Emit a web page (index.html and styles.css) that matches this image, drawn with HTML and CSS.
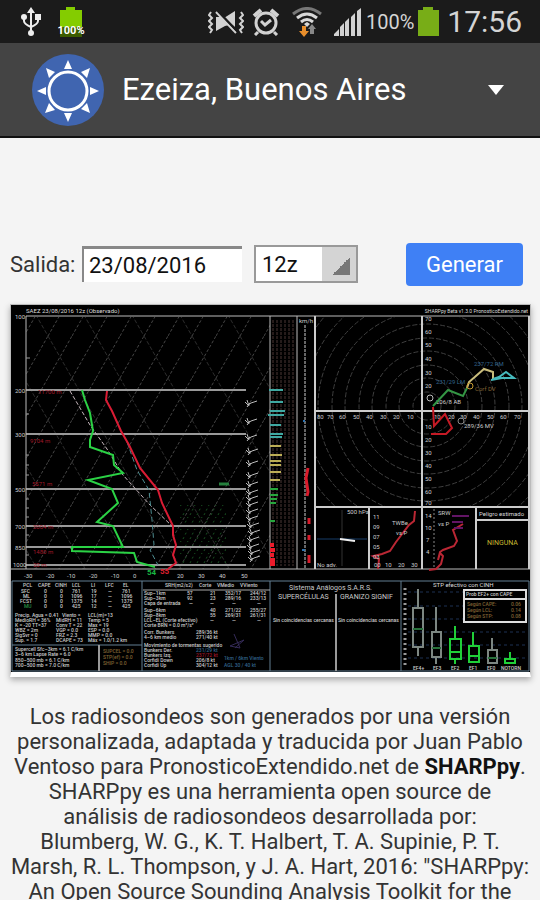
FILE: index.html
```html
<!DOCTYPE html>
<html lang="es">
<head>
<meta charset="utf-8">
<meta name="viewport" content="width=device-width, initial-scale=1">
<title>Radiosondeos</title>
<link rel="stylesheet" href="styles.css">
</head>
<body>
<div class="status">
  <div class="status-group left">
    <svg class="icon-usb" viewBox="0 0 20 30" aria-hidden="true"><g fill="none" stroke="#eee" stroke-width="2"><path d="M10 4v22M3 10v4q0 3 7 6 7-3 7-6v-4"/></g><g fill="#eee"><path d="M10 0l4 6H6z"/><circle cx="10" cy="26" r="3"/><circle cx="3" cy="10" r="3"/><path d="M14 7h6v6h-6z"/></g></svg>
    <div class="charge">
      <svg viewBox="0 0 22 30" aria-hidden="true"><path fill="#84cc00" d="M0 3h6V0h9v3h7v17H0z"/><path fill="#3c5c00" d="M0 20h22v10H0z"/></svg>
      <span>100%</span>
    </div>
  </div>
  <div class="status-group right">
    <svg class="icon-mute" viewBox="0 0 36 26" aria-hidden="true"><g fill="#d2d2d2"><path d="M8 8h5l8 8-4 1-9 5zM16 9L27 2v16z"/></g><g fill="none" stroke="#d2d2d2" stroke-width="2"><path d="M3 3L1 6l3 3-3 3 3 3-3 3 3 3-2 3M33 3l2 3-3 3 3 3-3 3 3 3-3 3 2 3"/><path d="M8 3l20 21"/></g><path d="M10 2l20 21" stroke="#1b1b1b" stroke-width="2"/></svg>
    <svg class="icon-alarm" viewBox="0 0 28 28" aria-hidden="true"><g fill="none" stroke="#d2d2d2" stroke-width="3"><circle cx="14" cy="15" r="10"/><path d="M9 13l4 4 6-5M6 24l-3 3M22 24l3 3"/><path d="M2 8l7-6M26 8l-7-6" stroke-width="4"/></g></svg>
    <svg class="icon-wifi" viewBox="0 0 30 30" aria-hidden="true"><g fill="none" stroke-width="3"><path d="M1 7q14-11 28 0" stroke="#777"/><path d="M5 11q10-8 20 0M9 15q6-5 12 0" stroke="#d8d8d8"/></g><path d="M12 17l3-2 3 2-3 3z" fill="#d8d8d8"/><path d="M10 19h4v5h3l-5 6-5-6h3z" fill="#e98f2c"/><path d="M18 27v-5h-2l4-5 4 5h-2v5z" fill="#888"/></svg>
    <svg class="icon-signal" viewBox="0 0 28 28" aria-hidden="true"><path fill="#d2d2d2" d="M0 28v-2l5-5v7zM6 28v-9l4-4v13zM11 28V14l4-4v18zM17 28V9l4-4v23zM23 28V3l4-3v28z"/></svg>
    <span class="percent">100%</span>
    <svg class="icon-battery" viewBox="0 0 21 29" aria-hidden="true"><path fill="#78ad17" d="M0 3h5V0h10v3h6v26H0z"/></svg>
    <span class="clock">17:56</span>
  </div>
</div>

<header class="bar">
  <svg class="logo" viewBox="0 0 72 72" aria-hidden="true"><circle cx="36" cy="36" r="36" fill="#4065b0"/><circle cx="36" cy="37" r="19" fill="none" stroke="#fff" stroke-width="3"/><g fill="#fff"><path d="M36 6l4 9h-8zM36 68l4-9h-8zM5 37l9-4v8zM67 37l-9-4v8zM14 14l9 4-6 6zM58 14l-9 4 6 6zM13 59l4-10 6 7zM58 59l-9-4 6-6z"/></g></svg>
  <h1>Ezeiza, Buenos Aires</h1>
  <button class="menu" type="button" aria-label="Cambiar lugar"><svg viewBox="0 0 16 10" aria-hidden="true"><path d="M0 0h16l-8 10z" fill="#fff"/></svg></button>
</header>

<main>
  <form class="controls">
    <label for="date">Salida:</label>
    <input id="date" type="text" value="23/08/2016">
    <select id="hour" aria-label="Hora"><option>12z</option><option>00z</option></select>
    <button class="go" type="button">Generar</button>
  </form>

  <figure class="sounding">
  <svg viewBox="11 305 519 367" role="img" aria-label="Radiosondeo SAEZ 23/08/2016 12z">
    <defs>
      <pattern id="adiabats" width="24" height="42" patternUnits="userSpaceOnUse"><path d="M0 42L24 0" stroke="#444" stroke-dasharray="3 2"/></pattern>
      <pattern id="curves" width="48" height="84" patternUnits="userSpaceOnUse"><path d="M0 0L48 84" stroke="#2c2c2c" stroke-dasharray="4 2"/></pattern>
      <pattern id="grid" width="4" height="4" patternUnits="userSpaceOnUse"><path d="M1 0v3" stroke="#4a3634"/></pattern>
      <pattern id="mixing" width="7" height="12" patternUnits="userSpaceOnUse"><path d="M1 11L6 1" stroke="#175020" stroke-dasharray="2 3"/></pattern>
      <path id="barb" d="M0 0l3 3 3-2 6-2M2-2l2 6M5 1l-3 4" fill="none" stroke="#bbb"/>
      <clipPath id="hodo"><path d="M316 317h212v189H316z"/></clipPath>
    </defs>
    <path d="M11 305h519v367H11z"/>
    <path d="M26 317h244v252H26z" fill="url(#curves)"/><path d="M26 317h244v252H26z" fill="url(#adiabats)"/>
    <path d="M180 505h46v60h-46z" fill="url(#mixing)"/>
    <g class="head"><text x="26" y="313">SAEZ 23/08/2016 12z (Observado)</text><text class="end" x="528" y="313">SHARPpy Beta v1.3.0  PronosticoExtendido.net</text></g>
    <g fill="none" stroke="#999"><path d="M26 390h220M26 434h220M26 489h220M26 526h220M26 547h220M26 565h220" stroke-width="2"/><path d="M26 316h504M26 316v253M11 569h519M270 316v253M297 316v253" stroke="#bbb"/><path d="M26 358h4M26 414h3M26 455h3M26 465h3M26 475h3M26 499h3M26 508h3M26 517h3M26 535h3M26 555h3"/></g>
    <path d="M70 391L90 425 107 449 123 475 150 505 172 526" fill="none" stroke="#c8b8be" stroke-dasharray="4 2"/>
    <path d="M127 442L137 470 149 490 152 520 154 545 150 550 158 565" fill="none" stroke="#4e8d91" stroke-dasharray="5 3"/>
    <path d="M107 391l-1 9 6 11 9 20 8 14 11 23 18 22 4 13 11 23v9l3 10-3 10 3 8-8 6" fill="none" stroke="#d91c34" stroke-width="2"/>
    <path d="M82 390l3 10 5 13 3 18-3 9v7l23 8 1 10 9 8-35 7 24 9 6 14-21 19 16 4 10 21H72v4l62 2 3 9 18 5" fill="none" stroke="#2bd245" stroke-width="2"/>
    <g class="surface"><text x="147" y="575" fill="#19b541">54</text><text x="160" y="574" fill="#e02030">55</text></g>
    <g class="tiny"><text x="15" y="319">100</text><text x="15" y="393">200</text><text x="15" y="437">300</text><text x="15" y="492">500</text><text x="15" y="529">700</text><text x="15" y="550">850</text><text x="13" y="567">1000</text>
    <text x="24" y="578">-30</text><text x="46" y="578">-20</text><text x="67" y="578">-10</text><text x="89" y="578">-20</text><text x="111" y="578">-10</text><text x="133" y="578">0</text><text x="177" y="578">20</text><text x="198" y="578">30</text><text x="219" y="578">40</text><text x="241" y="578">50</text>
    <text class="red" x="38" y="394">11700 m</text><text class="red" x="30" y="443">9104 m</text><text class="red" x="32" y="486">5571 m</text><text class="red" x="33" y="529">3004 m</text><text class="red" x="33" y="554">1480 m</text><text class="red" x="33" y="567">20 m</text></g>
    <path d="M219 484h10" stroke="#25803d" stroke-width="3"/>
    <g><use href="#barb" x="245" y="402"/><use href="#barb" x="245" y="420"/><use href="#barb" x="245" y="436"/><use href="#barb" x="246" y="450"/><use href="#barb" x="246" y="462"/><use href="#barb" x="246" y="474"/><use href="#barb" x="246" y="483"/><use href="#barb" x="246" y="491"/><use href="#barb" x="246" y="497"/><use href="#barb" x="246" y="503"/><use href="#barb" x="246" y="510"/><use href="#barb" x="246" y="517"/><use href="#barb" x="247" y="524"/><use href="#barb" x="248" y="531"/><use href="#barb" x="247" y="538"/><use href="#barb" x="247" y="545"/><use href="#barb" x="248" y="551"/><use href="#barb" x="248" y="557"/></g>

    <path d="M272 320h23v246h-23z" fill="url(#grid)"/>
    <g fill="none" stroke-width="2"><path d="M269 390h14M270 402h13M270 411h15M268 415h16M270 425h11M270 434h13M270 437h12" stroke="#3fa9a2"/><path d="M270 446h11M270 455h12M270 461h11M270 465h11M270 472h11M270 480h10" stroke="#bcae55"/><path d="M270 489h8M270 495h8M270 499h7M270 503h6M270 521h5" stroke="#27a63d"/><path d="M270 545h4M270 550h5M270 555h4M270 560h5M270 564h5" stroke="#ed1c2c" stroke-width="4"/></g>
    <path d="M305 325v243" stroke="#ccc" stroke-dasharray="3 1"/><g class="tiny"><text x="299" y="323">km/h</text></g>
    <path d="M308 468l-2 10 2 14-1 4M309 518v6M309 535v5M309 555v8" stroke="#d81b2b" stroke-width="3" fill="none"/>
    <path d="M303 421h2M302 550h3" stroke="#2f75b2" stroke-width="2"/>

    <g clip-path="url(#hodo)" fill="none" stroke="#3f3f3f" stroke-dasharray="5 2"><circle cx="427" cy="406" r="14"/><circle cx="427" cy="406" r="28"/><circle cx="427" cy="406" r="41"/><circle cx="427" cy="406" r="55"/><circle cx="427" cy="406" r="68"/><circle cx="427" cy="406" r="82"/><circle cx="427" cy="406" r="95"/><circle cx="427" cy="406" r="109"/><circle cx="427" cy="406" r="122"/><circle cx="427" cy="406" r="136"/></g>
    <g fill="none" stroke="#ccc" stroke-width="2"><path d="M315 316v253M315 411h214M422 316v253M315 507h214M369 507v62M476 507v62M476 520h53M529 316v253"/></g>
    <g class="tiny"><text x="425" y="321">70</text><text x="425" y="334">60</text><text x="425" y="347">50</text><text x="425" y="361">40</text><text x="425" y="375">30</text><text x="425" y="388">20</text><text x="425" y="429">10</text><text x="425" y="442">20</text><text x="425" y="455">30</text><text x="425" y="468">40</text><text x="425" y="481">50</text><text x="425" y="494">60</text><text x="425" y="505">70</text>
    <text x="317" y="419">80</text><text x="327" y="419">70</text><text x="339" y="419">60</text><text x="353" y="419">50</text><text x="366" y="419">40</text><text x="380" y="419">30</text><text x="393" y="419">20</text><text x="407" y="419">10</text><text x="434" y="419">10</text><text x="448" y="419">20</text><text x="460" y="419">30</text><text x="473" y="419">40</text><text x="487" y="419">50</text><text x="500" y="419">60</text><text x="514" y="419">70</text><text x="436" y="404">206/8 AB</text><text x="464" y="428">289/36 MV</text><text class="blue" x="436" y="384">231/29 LM</text><text class="blue" x="474" y="366">237/72 RM</text><text class="orange" x="475" y="391">Corf DV</text></g>
    <g fill="none" stroke-width="2"><path d="M433 406l15-16 15 6 4-8" stroke="#349644"/><path d="M467 388l2-6 15-13 9 3v7" stroke="#c9bd7c"/><path d="M493 379l6-2 7-5 8 6h-12l-11 2" stroke="#46b9bd"/><path d="M433 407l1 19 11-12 7 14-6 6h-15" stroke="#c61a25"/><circle cx="470" cy="386" r="3" stroke="#c59b33" stroke-width="1"/><circle cx="430" cy="398" r="3" stroke="#bbb" stroke-width="1"/><circle cx="461" cy="421" r="3" stroke="#888" stroke-width="1"/></g>

    <g fill="none"><path d="M342 510v56" stroke="#333"/><path d="M317 539h50" stroke="#173c68"/><path d="M340 539l15 2" stroke="#eee" stroke-width="2"/><path d="M415 511l-1 10-5 4-13 17-6 9-8 3-9 2 6 3-1 10" stroke="#ba2734" stroke-width="2"/><path d="M463 524l-10 6 4 11-3 5-11 4-3 2-2 8 2-7 3 3-2 8-5 5-7 1" stroke="#ba2734" stroke-width="2"/><path d="M452 516h17M452 522h11M454 528h9" stroke="#631565" stroke-width="2"/><path d="M434 509v58" stroke="#888" stroke-dasharray="2 2"/></g>
    <g class="tiny"><text x="347" y="514">500 hPa</text><text x="317" y="567">No adv.</text><text x="373" y="519">11</text><text x="373" y="529">09</text><text x="373" y="539">07</text><text x="373" y="549">05</text><text x="373" y="559">03</text><text x="374" y="567">00</text><text x="385" y="567">10</text><text x="398" y="567">20</text><text x="411" y="567">30</text><text x="392" y="525">TWBe</text><text x="396" y="535">vs P</text><text x="425" y="518">14</text><text x="425" y="530">10</text><text x="426" y="542">7</text><text x="426" y="554">4</text><text x="438" y="515">SRW</text><text x="438" y="526">vs P</text></g>
    <g class="head"><text x="479" y="516">Peligro estimado</text></g>
    <text class="risk" x="487" y="545">NINGUNA</text>

    <g fill="none" stroke="#637e92"><path d="M12 581h517v90H12zM142 581v90M270 581v90M401 581v90M12 645h130"/><path d="M99 645v26M336 594v77" stroke="#999" stroke-width="2"/><path d="M143 590h127" stroke="#aaa"/></g>
    <g class="data">
      <text x="23" y="587">PCL</text><text x="38" y="587">CAPE</text><text x="55" y="587">CINH</text><text x="72" y="587">LCL</text><text x="91" y="587">LI</text><text x="105" y="587">LFC</text><text x="123" y="587">EL</text>
      <text x="21" y="593">SFC</text><text x="44" y="593">0</text><text x="60" y="593">0</text><text x="72" y="593">761</text><text x="91" y="593">19</text><text x="108" y="593">—</text><text x="122" y="593">761</text>
      <text x="23" y="598">ML</text><text x="44" y="598">0</text><text x="60" y="598">0</text><text x="71" y="598">1096</text><text x="91" y="598">17</text><text x="108" y="598">—</text><text x="121" y="598">1096</text>
      <text x="20" y="603">FCST</text><text x="44" y="603">0</text><text x="60" y="603">0</text><text x="71" y="603">1375</text><text x="91" y="603">14</text><text x="108" y="603">—</text><text x="121" y="603">1375</text>
      <text class="green" x="24" y="608">MU</text><text x="44" y="608">0</text><text x="60" y="608">0</text><text x="72" y="608">425</text><text x="91" y="608">12</text><text x="108" y="608">—</text><text x="122" y="608">425</text>
      <text x="15" y="617">Precip. Agua = 0.41</text><text x="62" y="617">Viento =</text><text x="88" y="617">LCL(m)=13</text>
      <text x="15" y="622">MedioRH = 36%</text><text x="56" y="622">MidRH = 11</text><text x="88" y="622">Temp = 5</text>
      <text x="15" y="627">K = -20 TT=37</text><text x="56" y="627">Conv T = 22</text><text x="88" y="627">Max = 19</text>
      <text x="15" y="632">WBZ = 2m</text><text x="56" y="632">VGP = 0.0</text><text x="88" y="632">ESP = 0.0</text>
      <text x="15" y="637">SigSvr = 0</text><text x="56" y="637">FRZ = 2.3</text><text x="88" y="637">MMP = 0.0</text>
      <text x="15" y="642">Sup. = 1.7</text><text x="56" y="642">DCAPE = 73</text><text x="88" y="642">Máx = 1.0/1.2 km</text>
      <text x="15" y="651">Supercell Sfc–3km = 6.1 C/km</text><text x="15" y="656">3–6 km Lapse Rate = 6.0</text><text x="15" y="662">850–500 mb = 6.1 C/km</text><text x="15" y="667">700–500 mb = 7.0 C/km</text>
      <text class="brown" x="103" y="653">SUPCEL = 0.0</text><text class="brown" x="103" y="659">STP(ef) = 0.0</text><text class="brown" x="103" y="665">SHIP = 0.0</text>
      <text x="165" y="587">SRH(m2/s2)</text><text x="199" y="587">Corte</text><text x="217" y="587">VMedio</text><text x="240" y="587">VViento</text>
      <text x="144" y="595">Sup–1km</text><text x="187" y="595">57</text><text x="210" y="595">21</text><text x="225" y="595">352/17</text><text x="250" y="595">244/12</text>
      <text x="144" y="600">Sup–3km</text><text x="187" y="600">92</text><text x="210" y="600">23</text><text x="225" y="600">289/16</text><text x="250" y="600">233/13</text>
      <text x="144" y="605">Capa de entrada</text><text x="189" y="605">—</text><text x="210" y="605">—</text><text x="232" y="605">—</text><text x="257" y="605">—</text>
      <text x="144" y="612">Sup–6km</text><text x="210" y="612">40</text><text x="225" y="612">271/22</text><text x="250" y="612">255/27</text>
      <text x="144" y="617">Sup–8km</text><text x="210" y="617">55</text><text x="225" y="617">269/31</text><text x="250" y="617">261/31</text>
      <text x="144" y="622">LCL–EL (Corte efectivo)</text><text x="210" y="622">—</text><text x="232" y="622">—</text><text x="257" y="622">—</text>
      <text x="144" y="627">Corte BRN = 0.0 m²/s²</text><text x="144" y="634">Corr. Bunkers</text><text x="196" y="634">289/36 kt</text><text x="144" y="639">4–6 km medio</text><text x="196" y="639">271/40 kt</text><text x="144" y="647">Movimiento de tormentas sugerido</text>
      <text x="144" y="652">Bunkers Der.</text><text class="blue" x="196" y="652">231/29 kt</text><text x="144" y="657">Bunkers Izq.</text><text class="red" x="196" y="657">237/72 kt</text><text x="144" y="662">Corfidi Down</text><text x="196" y="662">206/8 kt</text><text x="144" y="667">Corfidi Up</text><text x="196" y="667">304/12 kt</text>
      <text class="blue" x="224" y="660">1km / 6km Viento</text><text class="blue" x="224" y="667">AGL 30 / 40 kt</text>
    </g>
    <path d="M234 634l6 14-10-2 14-6-9 8" fill="none" stroke="#352b58"/>
    <g class="titles"><text x="289" y="590">Sistema Análogos S.A.R.S.</text><text x="278" y="599">SUPERCÉLULAS</text><text x="340" y="599">GRANIZO SIGNIF</text></g>
    <g class="data"><text x="273" y="622">Sin coincidencias cercanas</text><text x="338" y="622">Sin coincidencias cercanas</text><text x="413" y="670">EF4+</text><text x="433" y="670">EF3</text><text x="451" y="670">EF2</text><text x="469" y="670">EF1</text><text x="487" y="670">EF0</text><text x="501" y="670">NOTORN</text></g>
    <g class="head"><text x="433" y="587">STP efectivo con CINH</text></g>
    <path d="M408 592h120M408 606h120M408 619h120M408 632h120M408 645h120M408 658h120" stroke="#1d3153" stroke-dasharray="3 3"/><path d="M405 588v80" stroke="#999" stroke-width="3" stroke-dasharray="2 3"/>
    <g fill="none" stroke="#7d8782" stroke-width="2"><path d="M418 589v19M413 608h10v39h-10zM418 647v9M436 607v25M432 632h9v25h-9zM436 657v7M492 638v11M488 650h9v13h-9z"/></g><g fill="none" stroke="#20cf38" stroke-width="2"><path d="M455 626v13M450 639h11v20h-11zM450 652h11M455 659v5M473 632v14M469 646h10v16h-10zM469 656h10M510 652v6M505 659h10v4h-10z"/><path d="M413 629h10M432 648h9M488 658h9" stroke="#28703b"/></g>
    <path d="M464 590h62v32h-62z" stroke="#ddd" stroke-width="2"/><path d="M464 599h62" stroke="#ddd" stroke-width="2"/><g class="data"><text x="466" y="596">Prob EF2+ con CAPE</text><text class="brown" x="467" y="606">Según CAPE:</text><text class="brown" x="511" y="606">0.06</text><text class="brown" x="467" y="612">Según LCL:</text><text class="brown" x="511" y="612">0.14</text><text class="brown" x="467" y="618">Según STP:</text><text class="brown" x="511" y="618">0.08</text></g>
  </svg>
  </figure>

  <p class="about">Los radiosondeos son generados por una versión personalizada, adaptada y traducida por Juan Pablo Ventoso para PronosticoExtendido.net de <strong>SHARPpy</strong>.<br>SHARPpy es una herramienta open source de análisis de radiosondeos desarrollada por:<br>Blumberg, W. G., K. T. Halbert, T. A. Supinie, P. T. Marsh, R. L. Thompson, y J. A. Hart, 2016: "SHARPpy: An Open Source Sounding Analysis Toolkit for the</p>
</main>
</body>
</html>
```
FILE: styles.css
```css
* { box-sizing: border-box; }
html { height: 100%; overflow: hidden; }
body { margin: 0; background: #f4f4f4; color: #333; font-family: Roboto, sans-serif; font-size: 22px; }

.status { display: flex; justify-content: space-between; align-items: center; height: 43px; padding: 0 18px 0 21px; background: #1b1b1b; color: #d4d4d4; }
.status-group { display: flex; align-items: center; }
.left { gap: 16px; }
.right { gap: 8px; }
.icon-usb { width: 20px; height: 30px; }
.charge { position: relative; display: flex; justify-content: center; width: 28px; }
.charge svg { width: 22px; height: 30px; }
.charge span { position: absolute; bottom: 0; font-size: 11px; font-weight: 700; line-height: 12px; color: #fff; }
.icon-mute { width: 36px; height: 26px; }
.icon-alarm { width: 28px; height: 28px; }
.icon-wifi { width: 30px; height: 30px; margin-left: 4px; }
.icon-signal { width: 28px; height: 28px; margin-left: 4px; }
.percent { font-size: 20px; margin: 0 -4px; }
.icon-battery { width: 21px; height: 29px; }
.clock { font-size: 30px; line-height: 43px; }

.bar { display: flex; align-items: center; height: 95px; padding: 0 36px 0 32px; background: #444; border-bottom: 2px solid #111; }
.logo { width: 72px; height: 72px; }
h1 { flex: 1; margin: 0 0 0 18px; color: #fff; font-size: 31px; font-weight: 400; line-height: 36px; }
.menu { display: flex; padding: 0; border: 0; background: none; }
.menu svg { width: 16px; height: 10px; }

main { padding: 104px 10px 0; }
.controls { display: flex; align-items: center; height: 44px; }
.controls label { width: 72px; font-size: 22px; }
.controls input { width: 160px; height: 36px; padding: 0 5px; border: 0; border-top: 3px solid #888; border-left: 2px solid #888; background: #fff; color: #111; font: 22px Roboto, sans-serif; }
.controls select { width: 104px; height: 38px; margin-left: 12px; padding: 0 6px; border: 2px solid #999; border-radius: 0; appearance: none; background: linear-gradient(135deg, transparent 50%, #777 50%) right 6px bottom 6px / 18px 18px no-repeat, linear-gradient(#d4d4d4, #d4d4d4) right / 34px 100% no-repeat, #fff; color: #111; font: 22px Roboto, sans-serif; }
.go { width: 117px; height: 43px; margin-left: auto; margin-right: 7px; padding: 0; border: 0; border-radius: 4px; background: #3f80f5; color: #fff; font: 22px Roboto, sans-serif; }

.sounding { margin: 18px -1px 0 0; border: 1px solid #bbb; border-bottom: 5px solid #fff; box-shadow: 0 3px 6px #aaa; }
.sounding svg { display: block; width: 100%; font-family: Roboto, sans-serif; }
.tiny text { fill: #ccc; font-size: 6px; }
.head text { fill: #ddd; font-size: 6px; }
.head .end { text-anchor: end; font-size: 5px; }
.data text { fill: #ccc; font-size: 5px; font-weight: 500; }
.titles text { fill: #ccc; font-size: 7px; }
.surface text { font-size: 8px; font-weight: 700; }
.risk { fill: #c7bb32; font-size: 7px; }
.sounding .red { fill: #a01828; }
.sounding .blue { fill: #32648d; }
.sounding .green { fill: #2a9040; }
.sounding .orange, .sounding .brown { fill: #806333; }

.about { margin: 27px 0 0; text-align: center; font-size: 22px; line-height: 25px; }
.about strong { color: #111; }
```
